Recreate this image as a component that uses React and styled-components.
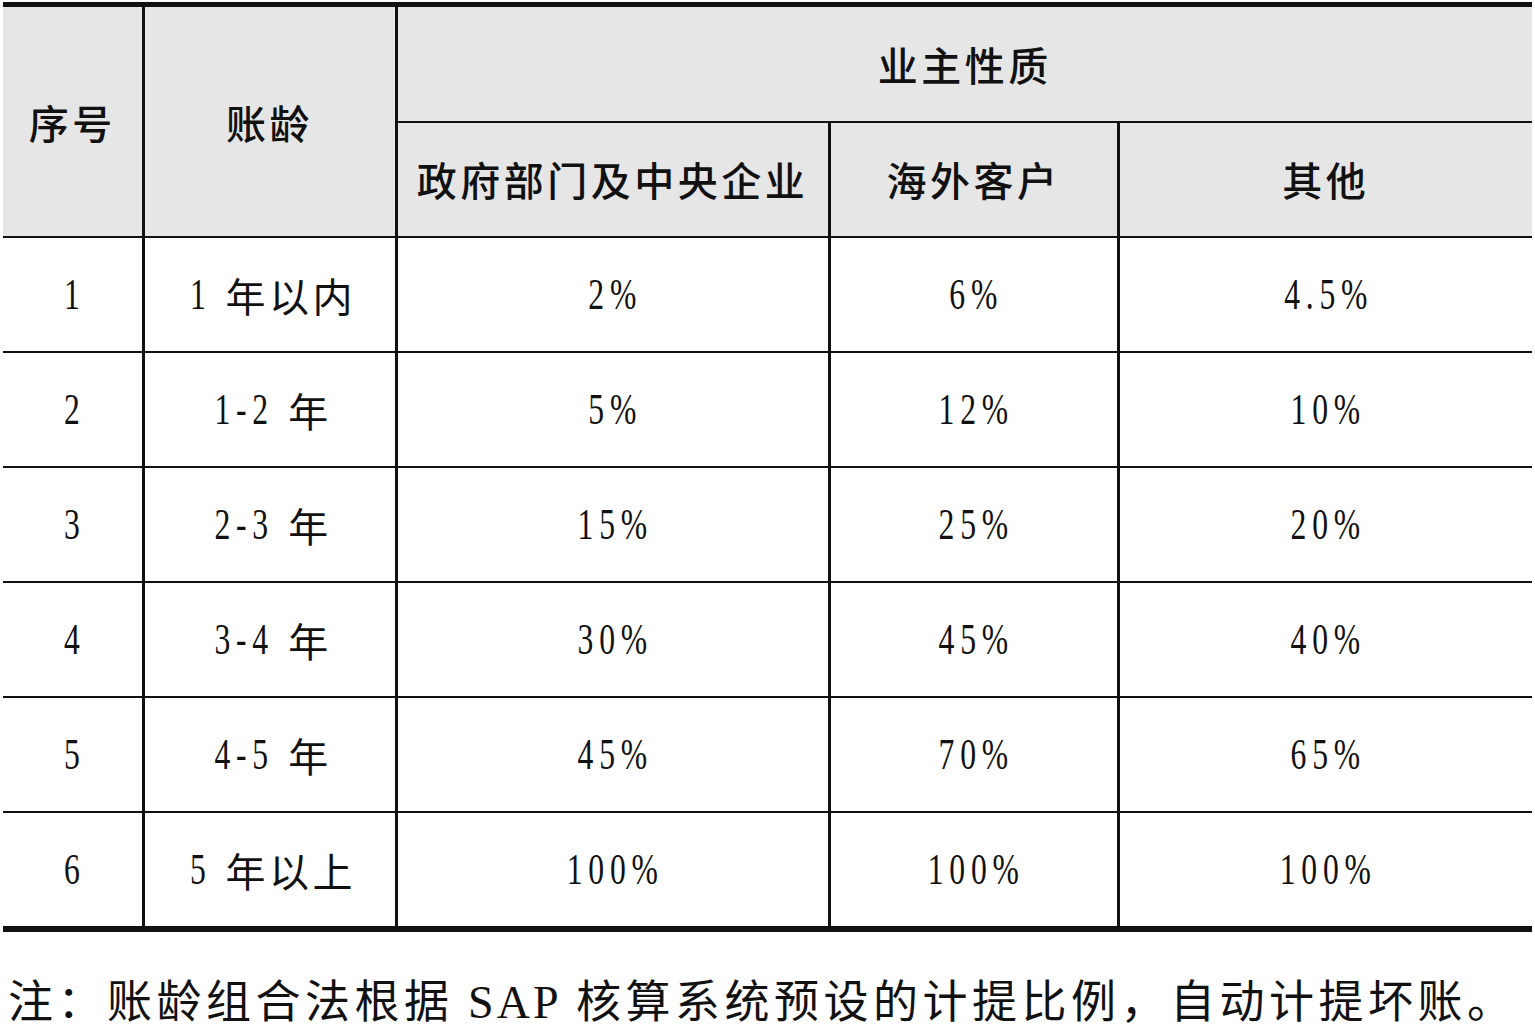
import React from "react";
import styled, { createGlobalStyle } from "styled-components";

// 账龄组合计提比例表
const rows = [
  { no: "1", age: ["1", " 年以内"], rates: ["2%", "6%", "4.5%"] },
  { no: "2", age: ["1-2", " 年"], rates: ["5%", "12%", "10%"] },
  { no: "3", age: ["2-3", " 年"], rates: ["15%", "25%", "20%"] },
  { no: "4", age: ["3-4", " 年"], rates: ["30%", "45%", "40%"] },
  { no: "5", age: ["4-5", " 年"], rates: ["45%", "70%", "65%"] },
  { no: "6", age: ["5", " 年以上"], rates: ["100%", "100%", "100%"] },
];

const GlobalStyle = createGlobalStyle`
  body {
    margin: 0;
    background: #fff;
    font-family: "Noto Sans CJK SC", sans-serif;
    color: #111;
  }
`;

const Page = styled.div`
  padding: 2px 3px 0 3px;
`;

const Table = styled.table`
  width: 1529px;
  border-collapse: collapse;
  table-layout: fixed;
  border-top: 5px solid #111;
  border-bottom: 6px solid #111;
`;

const Col = styled.col`
  width: ${(p) => p.w}px;
`;

const Th = styled.th`
  background: #e6e6e6;
  height: ${(p) => (p.rowSpan ? 229 : 113)}px;
  padding: 0;
  font-size: 40px;
  font-weight: 500;
  letter-spacing: 3.5px;
  text-align: center;
  vertical-align: middle;
  border-bottom: 2px solid #111;
  border-right: ${(p) => (p.last ? "none" : "3px solid #111")};
`;

const Td = styled.td`
  height: 113px;
  padding: 0;
  text-align: center;
  vertical-align: middle;
  font-size: 40px;
  letter-spacing: 3.5px;
  border-bottom: 2px solid #111;
  border-right: ${(p) => (p.last ? "none" : "3px solid #111")};
`;

const Cell = styled.div`
  display: flex;
  justify-content: center;
  align-items: center;
  white-space: pre;
`;

// 数字用窄体 Times 风格
const Num = styled.span`
  display: inline-block;
  font-family: "Liberation Serif", serif;
  font-size: 44px;
  letter-spacing: 8px;
  padding-left: 8px;
  transform: scaleX(0.72);
  margin: 0 ${(p) => p.trim || 0}px;
`;

const Note = styled.p`
  margin: 34px 0 0 5px;
  font-size: 45px;
  letter-spacing: 4.5px;
  white-space: nowrap;
`;

const Latin = styled.span`
  font-family: "Liberation Serif", serif;
  font-size: 46px;
  letter-spacing: 3px;
`;

const trimFor = (s) => -Math.round(s.length * 3.8);

export default function App() {
  return (
    <Page>
      <GlobalStyle />
      <Table>
        <colgroup>
          <Col w={140} />
          <Col w={253} />
          <Col w={433} />
          <Col w={289} />
          <Col w={414} />
        </colgroup>
        <thead>
          <tr>
            <Th rowSpan={2}>序号</Th>
            <Th rowSpan={2}>账龄</Th>
            <Th colSpan={3} last>
              业主性质
            </Th>
          </tr>
          <tr>
            <Th>政府部门及中央企业</Th>
            <Th>海外客户</Th>
            <Th last>其他</Th>
          </tr>
        </thead>
        <tbody>
          {rows.map((r) => (
            <tr key={r.no}>
              <Td>
                <Cell>
                  <Num>{r.no}</Num>
                </Cell>
              </Td>
              <Td>
                <Cell>
                  <Num trim={trimFor(r.age[0])}>{r.age[0]}</Num>
                  {r.age[1]}
                </Cell>
              </Td>
              {r.rates.map((v, i) => (
                <Td key={i} last={i === 2}>
                  <Cell>
                    <Num>{v}</Num>
                  </Cell>
                </Td>
              ))}
            </tr>
          ))}
        </tbody>
      </Table>
      <Note>
        注：账龄组合法根据 <Latin>SAP</Latin> 核算系统预设的计提比例，自动计提坏账。
      </Note>
    </Page>
  );
}
